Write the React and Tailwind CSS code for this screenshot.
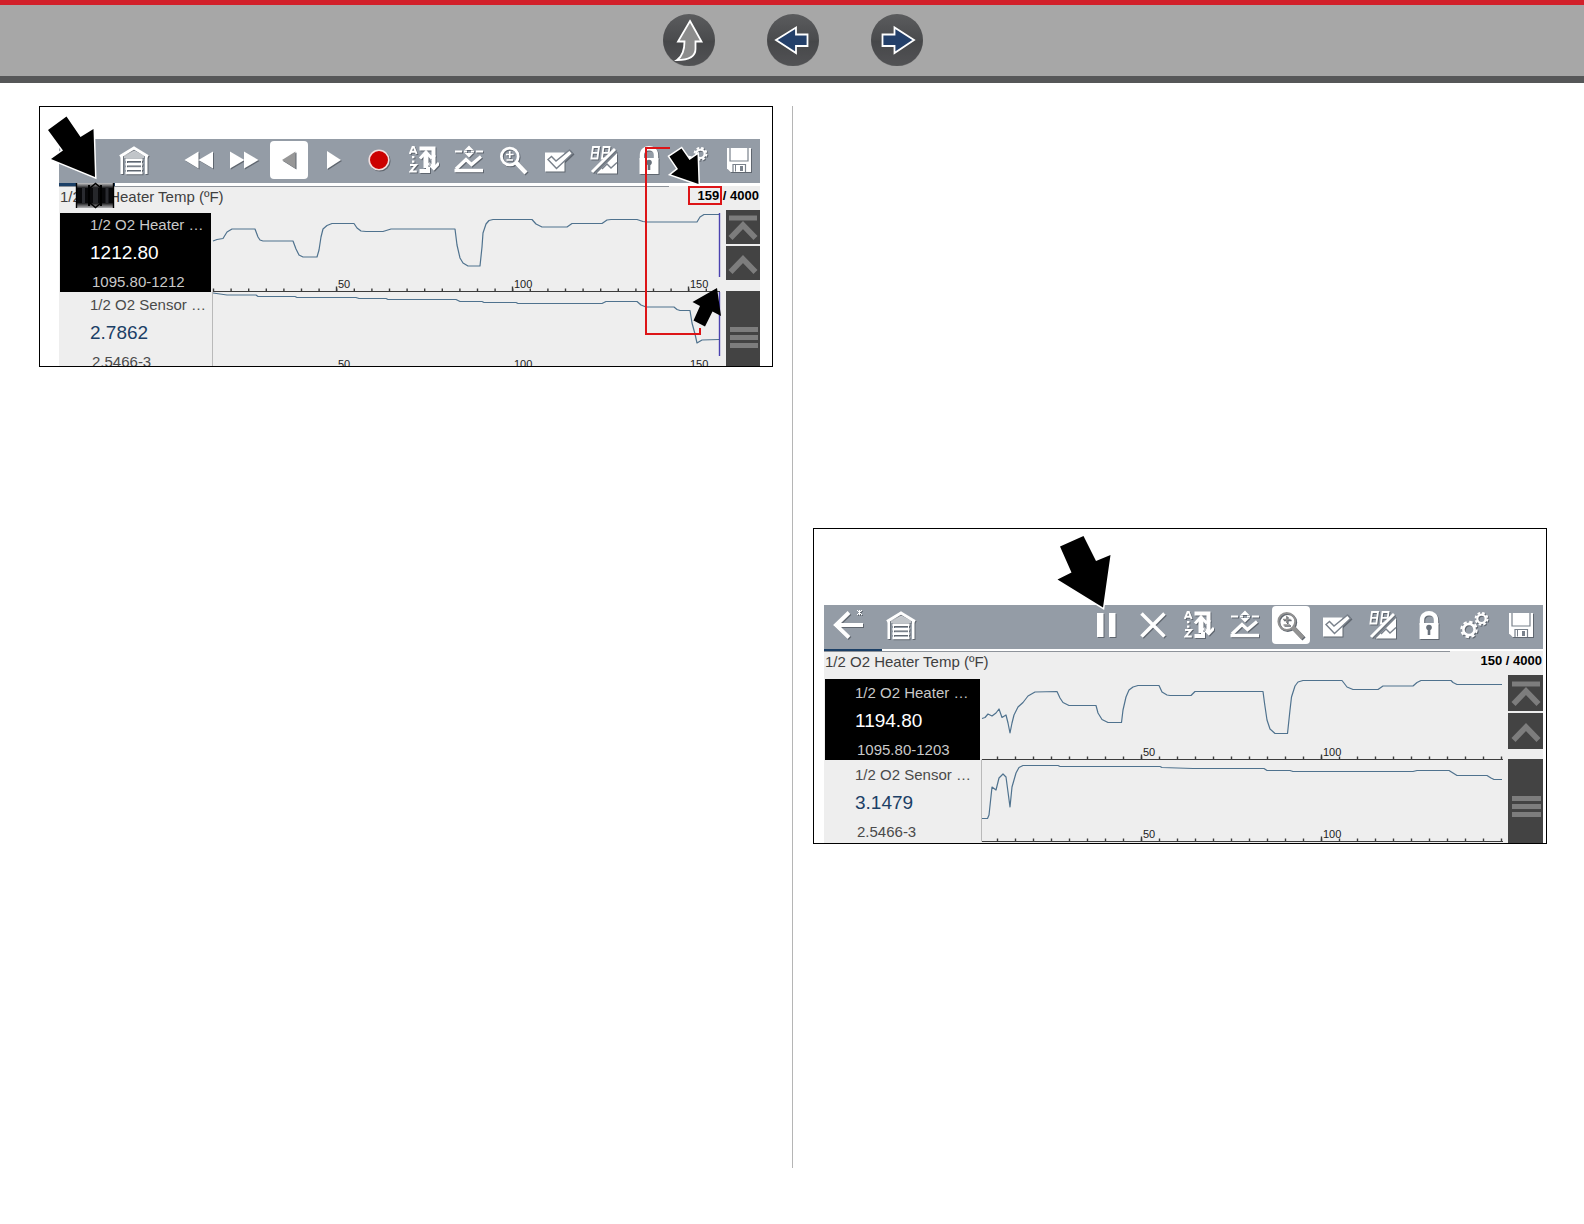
import React from 'react';

const Glyph = ({ children, className = 'text-white' }) => (
  <svg
    viewBox="0 0 30 30"
    className={`w-[30px] h-[30px] shrink-0 drop-shadow-[1px_1px_0px_#5f666f] ${className}`}
    fill="none"
    stroke="currentColor"
    strokeWidth="3"
    aria-hidden="true"
  >
    {children}
  </svg>
);

const icons = {
  back: (
    <Glyph>
      <path d="M30 15H3M16 2.5L3 15L16 27.5" strokeWidth="4" />
      <path d="M24 0L29 5M29 0L24 5M26.5 0V5" strokeWidth="1" />
    </Glyph>
  ),
  home: (
    <Glyph>
      <path d="M1 11.5L15 3L29 11.5" strokeWidth="3" />
      <path d="M2.8 11V29M27.2 11V29" strokeWidth="2.6" />
      <path d="M5 10.5L15 5.5L25 10.5V13H5Z" fill="currentColor" stroke="none" opacity="0.55" />
      <path d="M6.5 14.8H23.5M6.5 19.2H23.5M6.5 23.6H23.5M6.5 28H23.5" strokeWidth="2.6" />
      <path d="M7.5 14V29M22.5 14V29" strokeWidth="1" />
    </Glyph>
  ),
  rewind: (
    <Glyph>
      <path d="M0.5 15L14.5 6.5V23.5ZM14.5 15L29 6.5V23.5Z" fill="currentColor" stroke="none" />
    </Glyph>
  ),
  forward: (
    <Glyph>
      <path d="M1 6.5L15.5 15L1 23.5ZM15 6.5L29.5 15L15 23.5Z" fill="currentColor" stroke="none" />
    </Glyph>
  ),
  stepBack: (
    <Glyph className="text-[#979797]">
      <path d="M8 15L21.5 6.5V23.5Z" fill="currentColor" stroke="none" />
    </Glyph>
  ),
  stepForward: (
    <Glyph>
      <path d="M8 6L22 15L8 24Z" fill="currentColor" stroke="none" />
    </Glyph>
  ),
  record: (
    <Glyph>
      <circle cx="15" cy="15" r="9.8" fill="#cc0000" stroke="#f2dede" strokeWidth="1.6" />
    </Glyph>
  ),
  pause: (
    <Glyph>
      <path d="M5 3H11.5V27H5ZM17 3H23.5V27H17Z" fill="currentColor" stroke="none" />
    </Glyph>
  ),
  close: (
    <Glyph>
      <path d="M3.5 3.5L26.5 26.5M26.5 3.5L3.5 26.5" strokeWidth="3.6" />
    </Glyph>
  ),
  sort: (
    <Glyph>
      <path d="M0.8 9L3.6 2H4.8L7.6 9M2 6.8H6.4" strokeWidth="2" />
      <path d="M4.2 11V13.2M4.2 15.5V17.7" strokeWidth="2.4" />
      <path d="M1 20H7L1.5 26.5H7.8" strokeWidth="2" />
      <path d="M10.5 3.5H24.5V12" strokeWidth="4" />
      <path d="M10.5 26H19V22" strokeWidth="4" />
      <path d="M17 23V9" strokeWidth="5" />
      <path d="M11 13.5L17 7L23 13.5" strokeWidth="3" />
      <path d="M24.5 10V22" strokeWidth="4" />
      <path d="M19.5 18L24.8 23.5L30 18" strokeWidth="3" />
      <path d="M21 15V21" stroke="#79818b" strokeWidth="1" />
    </Glyph>
  ),
  threshold: (
    <Glyph>
      <path d="M1 6.5H8M10 6.5H13M17 6.5H20M22 6.5H29" strokeWidth="2" />
      <path d="M15 0.5L19.5 5H10.5ZM15 12.5L10.5 8H19.5Z" fill="currentColor" stroke="none" />
      <path d="M2 24L12 14.5L17.5 19.5L27 11.5" strokeWidth="3.2" />
      <path d="M0.5 25.5H29" strokeWidth="3.4" />
    </Glyph>
  ),
  zoom: (
    <Glyph>
      <circle cx="10.8" cy="11.5" r="8.4" strokeWidth="2.8" />
      <path d="M7 9.5H14.6M10.8 6V13M7.5 15H14" strokeWidth="1.6" />
      <path d="M17 17.5L27 28" strokeWidth="4.4" />
    </Glyph>
  ),
  zoomActive: (
    <Glyph className="text-[#929292]">
      <circle cx="10.8" cy="11.5" r="8.4" strokeWidth="2" />
      <path d="M7 9.5H14.6M10.8 6V13M7.5 15H14" strokeWidth="1.6" />
      <path d="M17 17.5L27 28" strokeWidth="4.4" />
    </Glyph>
  ),
  check: (
    <Glyph>
      <path d="M1 7.5H20.5V26.5H1Z" fill="currentColor" stroke="none" />
      <path d="M4 14.5L7.5 11.5L12 16L25.5 5L28.5 8.5L12.5 23.5Z" fill="#fff" stroke="#79818b" strokeWidth="1.4" />
    </Glyph>
  ),
  digital: (
    <Glyph>
      <path d="M4 2H10L9.2 7.5L8.4 13.5H2.4L3.2 7.5ZM3.2 7.8H9.2" strokeWidth="1.8" />
      <path d="M14.5 2H20.5L19.7 7.8H13.7ZM13.7 7.8L12.9 13.5H16" strokeWidth="1.8" />
      <path d="M28 8V28.5H7.5Z" fill="currentColor" stroke="none" />
      <path d="M26 4L3 27" strokeWidth="3" />
      <path d="M27.5 6.5L6 28" stroke="#79818b" strokeWidth="1.2" />
      <path d="M13 24L18 19L22 23L28 17.5" stroke="#79818b" strokeWidth="1.4" />
    </Glyph>
  ),
  lock: (
    <Glyph>
      <path d="M8 15V10C8 1 22 1 22 10V15" strokeWidth="4.4" />
      <path d="M5.5 13H24.5V29H5.5Z" fill="currentColor" stroke="none" />
      <circle cx="15" cy="17.5" r="2.8" fill="#69717b" stroke="none" />
      <path d="M15 18V25" stroke="#69717b" strokeWidth="2.6" />
    </Glyph>
  ),
  settings: (
    <Glyph>
      <circle cx="9" cy="19.5" r="5.6" strokeWidth="2.6" />
      <circle cx="9" cy="19.5" r="7.6" strokeWidth="2.2" strokeDasharray="3.4 2.57" />
      <circle cx="21.5" cy="8.8" r="4.2" strokeWidth="2.2" />
      <circle cx="21.5" cy="8.8" r="5.9" strokeWidth="2" strokeDasharray="2.6 2.03" />
    </Glyph>
  ),
  save: (
    <Glyph>
      <path d="M3 3H27V27H6.5L3 23.5Z" fill="currentColor" stroke="none" />
      <path d="M6 3V16H24V3" stroke="#79818b" strokeWidth="1.2" />
      <path d="M9 27V19.5H21.5V27" stroke="#79818b" strokeWidth="1.2" />
      <path d="M16 21H19V26H16Z" fill="#79818b" stroke="none" />
      <path d="M11.5 20V26.5" stroke="#79818b" strokeWidth="1" />
    </Glyph>
  )
};

const ToolButton = ({ name, active, className }) => (
  <button type="button" aria-label={name} className={`flex h-11 shrink-0 items-center justify-center ${className}`}>
    <span className={`flex h-[38px] w-[38px] items-center justify-center rounded-sm ${active ? 'bg-white' : ''}`}>
      {icons[name]}
    </span>
  </button>
);

const Plot = ({ viewBox, size, left, right, axes, first, step, count, labels, traces, cursors }) => (
  <svg viewBox={viewBox} preserveAspectRatio="xMinYMin meet" className={`block min-w-0 flex-1 ${size}`}>
    {/* frame line beside the second row */}
    <path d={`M${left - 0.5} ${axes[0]}V${axes[1]}`} stroke="#b9b9b9" strokeWidth="1" />
    {axes.map((y) => (
      <g key={y} stroke="#3c3c3c" strokeWidth="1">
        <path d={`M${left} ${y}H${right}`} />
        {Array.from({ length: count }, (_, i) => (
          <path key={i} d={`M${first + i * step} ${y}v-3`} strokeWidth="1.4" />
        ))}
        {labels.map((l) => (
          <path key={l.text} d={`M${l.x - 1.5} ${y}v-5`} strokeWidth="1.4" />
        ))}
        {labels.map((l) => (
          <text
            key={l.text}
            x={l.x}
            y={y - 4}
            fill="#222"
            stroke="none"
            className="font-['Liberation_Sans',Arial,sans-serif] text-[11px]"
          >
            {l.text}
          </text>
        ))}
      </g>
    ))}
    {traces.map((points, i) => (
      <polyline key={i} points={points} fill="none" stroke="#4f728e" strokeWidth="1.2" strokeLinejoin="round" />
    ))}
    {cursors.map((d) => (
      <path key={d} d={d} stroke="#4a42b0" strokeWidth="1.4" />
    ))}
  </svg>
);

const ScrollRail = ({ width, button, gap }) => (
  <div className={`flex shrink-0 flex-col ${width}`}>
    <button type="button" aria-label="Scroll to top" className={`flex shrink-0 items-center justify-center bg-[#434343] ${button}`}>
      <svg viewBox="0 0 30 30" className="h-[30px] w-[30px]" fill="none" stroke="#7d7d7d">
        <path d="M1 6H29" strokeWidth="5" />
        <path d="M2.5 26L15 13L27.5 26" strokeWidth="5.6" />
      </svg>
    </button>
    <button type="button" aria-label="Scroll up" className={`mt-0.5 flex shrink-0 items-center justify-center bg-[#434343] ${button}`}>
      <svg viewBox="0 0 30 30" className="h-[30px] w-[30px]" fill="none" stroke="#7d7d7d">
        <path d="M2.5 24L15 11L27.5 24" strokeWidth="5.6" />
      </svg>
    </button>
    <div className={`flex flex-1 flex-col items-center justify-center gap-[3px] bg-[#434343] pl-1 pr-0.5 ${gap}`}>
      <div className="h-[5px] w-full bg-[#7d7d7d]" />
      <div className="h-[5px] w-full bg-[#7d7d7d]" />
      <div className="h-[5px] w-full bg-[#7d7d7d]" />
    </div>
  </div>
);

const Reading = ({ label, value, range, selected, rowClass }) => (
  <div className={`flex shrink-0 flex-col gap-1.5 pl-[30px] ${rowClass} ${selected ? 'bg-black text-[#c9c9c9]' : 'text-[#4a4a4a]'}`}>
    <div className="whitespace-nowrap text-[15px] leading-5">{label}</div>
    <div className={`text-[19px] leading-6 ${selected ? 'text-white' : 'text-[#1b3f66]'}`}>{value}</div>
    <div className="mt-px pl-0.5 text-[15px] leading-5">{range}</div>
  </div>
);

const Scanner = ({ data }) => (
  <div className="bg-[#eeeeee] text-[#3f3f3f]">
    <div className="flex h-11 items-center justify-between bg-[#949ca6]">
      <div className={`flex gap-[5px] ${data.leadClass}`}>
        {data.lead.map((name) => (
          <ToolButton key={name} name={name} className={`w-12 ${data.toolPad}`} />
        ))}
      </div>
      <div className="-mr-px flex">
        {data.tools.map((name) => (
          <ToolButton key={name} name={name} className={`${data.toolWidth} ${data.toolPad}`} active={name === data.active} />
        ))}
      </div>
    </div>
    <div className={`bg-white ${data.stripClass}`}>
      <div className="h-full w-[8%] bg-[#1b3f66]" />
    </div>
    <div className="h-px w-[87%] bg-[#8e939a]" />
    <div className="flex h-[23px] items-start justify-between px-px">
      <h2 className="text-[15px] leading-5">{data.title}</h2>
      <span className="text-[13px] font-bold leading-[18px] text-black">{data.frames}</span>
    </div>
    <div className={`flex overflow-hidden ${data.bodyHeight}`}>
      <div className={`flex shrink-0 flex-col pl-px ${data.listClass}`}>
        {data.readings.map((r, i) => (
          <Reading key={r.label} {...r} selected={i === 0} rowClass={data.rowClass} />
        ))}
      </div>
      <Plot {...data.plot} />
      <ScrollRail {...data.rail} />
    </div>
  </div>
);

const playback = {
  lead: ['home'],
  leadClass: 'pl-[51px]',
  tools: ['rewind', 'forward', 'stepBack', 'stepForward', 'record', 'sort', 'threshold', 'zoom', 'check', 'digital', 'lock', 'settings', 'save'],
  toolWidth: 'w-[45px]',
  toolPad: 'pb-0.5',
  active: 'stepBack',
  stripClass: 'h-[3px]',
  title: '1/2 O2 Heater Temp (ºF)',
  frames: '159 / 4000',
  bodyHeight: 'h-[156px]',
  listClass: 'w-[152px] gap-px pt-[3px]',
  rowClass: 'h-[79px] pt-0.5',
  readings: [
    { label: '1/2 O2 Heater …', value: '1212.80', range: '1095.80-1212' },
    { label: '1/2 O2 Sensor …', value: '2.7862', range: '2.5466-3' }
  ],
  plot: {
    viewBox: '211 210 515 156',
    size: 'h-[156px]',
    left: 213,
    right: 720,
    axes: [291.5, 371.5],
    first: 213.5,
    step: 17.6,
    count: 29,
    labels: [
      { text: '50', x: 338 },
      { text: '100', x: 514 },
      { text: '150', x: 690 }
    ],
    traces: [
      '213,241 217,239.5 223,238.5 227,232 232,229 255,229 258,237 260,240 263,241 293,241 296,249 299,255 303,257 317,257 319,250 321,237 323,229 327,225.5 332,223.5 354,223.5 357,228 361,231 366,231.5 383,231.5 391,229 455,229 457,245 460,258 463,263 468,266 480,266 482,247 483,233 486,224 489,220.5 493,219.5 532,219.5 536,224 542,227 567,227 572,223.5 602,223.5 607,220 611,219.5 637,219.5 643,221.5 647,222 697,222 700,217 704,214.5 719,214.5',
      '213,293 220,294 227,295 256,295 258,296.5 295,296.5 297,297.5 356,297.5 359,298.5 386,298.5 388,299.5 456,299.5 460,301.5 482,301.5 484,302.5 516,302.5 518,303.5 602,303.5 606,301.5 637,301.5 641,305 646,307 674,307 677,309.5 680,310.5 690,310.5 692,323 695,334 697,343 702,340 719,339.5'
    ],
    cursors: ['M719.5 213V277', 'M719.5 292V356']
  },
  rail: { width: 'w-[34px]', button: 'h-[34px]', gap: 'mt-[11px] pt-[18px]' }
};

const live = {
  lead: ['back', 'home'],
  leadClass: '',
  tools: ['pause', 'close', 'sort', 'threshold', 'zoomActive', 'check', 'digital', 'lock', 'settings', 'save'],
  toolWidth: 'w-[46px]',
  toolPad: 'pb-1',
  active: 'zoomActive',
  stripClass: 'h-0.5',
  title: '1/2 O2 Heater Temp (ºF)',
  frames: '150 / 4000',
  bodyHeight: 'h-[168px]',
  listClass: 'w-[156px] gap-px pt-1',
  rowClass: 'h-[81px] pt-1',
  readings: [
    { label: '1/2 O2 Heater …', value: '1194.80', range: '1095.80-1203' },
    { label: '1/2 O2 Sensor …', value: '3.1479', range: '2.5466-3' }
  ],
  plot: {
    viewBox: '980 675 528 168',
    size: 'h-[168px]',
    left: 982,
    right: 1503,
    axes: [759.5, 841.5],
    first: 997.5,
    step: 18,
    count: 29,
    labels: [
      { text: '50', x: 1143 },
      { text: '100', x: 1323 }
    ],
    traces: [
      '982,718.5 985,717.5 988,714 992,716 996,713 999,709 1002,717.5 1006,715 1008,723 1010,733 1012,723 1014,715 1018,707 1023,702.5 1028,696 1035,692 1057,691.5 1060,698 1063,702.5 1069,705.5 1096,705.5 1098,713 1102,719.5 1108,722.5 1121.5,722.5 1123,710 1126,697 1129,690 1133,687 1138,685.5 1159,685.5 1162,692 1167,695 1170,695.5 1191,695.5 1195,691.5 1263,691.5 1264.5,703 1267,720 1270,729 1275,733.5 1287.5,733.5 1290,710 1291.5,697 1295,686 1298,682 1303,680.5 1342,680.5 1347,687 1353,689.5 1378,689.5 1383,686 1413,686 1417,682.5 1421,680.5 1451,680.5 1453,682.5 1457,684.5 1502,684.5',
      '982,818.5 987.5,818.5 989,815 992,787 996,790 999,778 1003,774 1006,777 1010,807 1012,787 1016,773 1019,767.5 1023,765.5 1058,765.5 1060,766.5 1160,766.5 1162,767.5 1193,768.5 1264,768.5 1267,770.5 1290,770.5 1293,771.5 1413,771.5 1417,770.5 1449,770.5 1453,773 1457,775.5 1487,775.5 1491,778 1494,779.5 1502,779.5'
    ],
    cursors: []
  },
  rail: { width: 'w-[35px]', button: 'h-9', gap: 'mt-2.5 pt-2.5' }
};

const navItems = [
  { label: 'Up', fill: '#8c8c8c', d: 'M27 7L38.5 27.5H32.5V35C32.5 42 26 46 14 46C20 42 21.5 36 21.5 27.5H15Z' },
  { label: 'Previous', fill: '#24406a', d: 'M9 26L29 13.5V20.5H40.5V32H29V39Z' },
  { label: 'Next', fill: '#24406a', d: 'M43 26L23.5 13.5V20.5H11.5V32H23.5V39Z' }
];

const App = () => {
  return (
    <div className="min-h-screen bg-white font-['Liberation_Sans',Arial,sans-serif]">
      <header className="border-b-[7px] border-t-[5px] border-b-[#565758] border-t-[#d2202a] bg-[#a7a7a7]">
        <nav className="flex justify-center gap-[52px] pb-2.5 pl-0.5 pt-[9px]">
          {navItems.map((item) => (
            <a key={item.label} href="#" aria-label={item.label} className="h-[52px] w-[52px] rounded-full bg-linear-to-b from-[#5b5c5e] via-[#4a4b4d] to-[#5c5d5f]">
              <svg viewBox="0 0 52 52" className="h-full w-full">
                <path d="M0 26.5H52A26 26 0 0 1 0 26.5Z" fill="#3f4042" opacity="0.35" />
                <path d={item.d} fill={item.fill} stroke="#fff" strokeWidth="1.8" />
              </svg>
            </a>
          ))}
        </nav>
      </header>

      <main className="grid grid-cols-2 pb-14 pl-[39px] pr-[37px] pt-[23px]">
        <section className="min-h-[1062px] border-r border-[#b5b5b5] pr-[19px]">
          <figure className="relative border border-black pl-[19px] pr-3 pt-8">
            <Scanner data={playback} />

            {/* Callouts */}
            <svg viewBox="40 107 732 259" className="pointer-events-none absolute left-0 top-0 h-[259px] w-[732px]">
              {/* thumb wheel */}
              <defs>
                <linearGradient id="wheel" x1="0" y1="0" x2="0" y2="1">
                  <stop offset="0" stopColor="#c4c4c6" />
                  <stop offset="0.22" stopColor="#08080a" />
                  <stop offset="0.78" stopColor="#08080a" />
                  <stop offset="1" stopColor="#b4b4b6" />
                </linearGradient>
              </defs>
              <rect x="76" y="183" width="38" height="25" fill="url(#wheel)" />
              <path d="M76.5 183V208M113.5 183V208" stroke="#000" strokeWidth="1.4" />
              <path d="M83.5 188V203M107 188V203" stroke="#2a2b30" strokeWidth="3" />
              <path d="M89 185V206M101 185V206" stroke="#000" strokeWidth="2" />
              <path d="M93 188H98V203H93Z" fill="#26272b" />
              <path d="M90 188L95.5 183.5L101 188M90 203L95.5 207.5L101 203" fill="none" stroke="#000" strokeWidth="1.6" />
              <path d="M670 148H646V334H700V328" fill="none" stroke="#dd1417" strokeWidth="2" />
              <rect x="689" y="187" width="32" height="17" fill="none" stroke="#dd1417" strokeWidth="2" />
              <g fill="#000" stroke="#fff" strokeWidth="3" style={{ paintOrder: 'stroke' }}>
                <path d="M66.5 116.5L80.5 137L93.5 129L95 177L51 159L63 150.5L48 130Z" />
                <path d="M681.5 148.5L689.5 160L697.5 154.5L698.5 184L671 174.5L678 169L669.5 156.5Z" />
              </g>
              <path d="M717 288L721 316L712.5 311.5L705 326.5L693.5 320.5L700 306L692.5 302Z" />
            </svg>
          </figure>
        </section>

        <section className="pl-5 pt-[422px]">
          <figure className="relative border border-black pl-2.5 pr-[3px] pt-[76px]">
            <Scanner data={live} />
            <svg viewBox="1058 534 56 78" className="pointer-events-none absolute left-[243px] top-1 h-[78px] w-14">
              <path
                d="M1084.5 537L1097 562L1111.5 556L1104 608.5L1058.5 580.5L1072.5 573.5L1061 547.5Z"
                stroke="#fff"
                strokeWidth="3"
                style={{ paintOrder: 'stroke' }}
              />
            </svg>
          </figure>
        </section>
      </main>
    </div>
  );
};

export default App;
